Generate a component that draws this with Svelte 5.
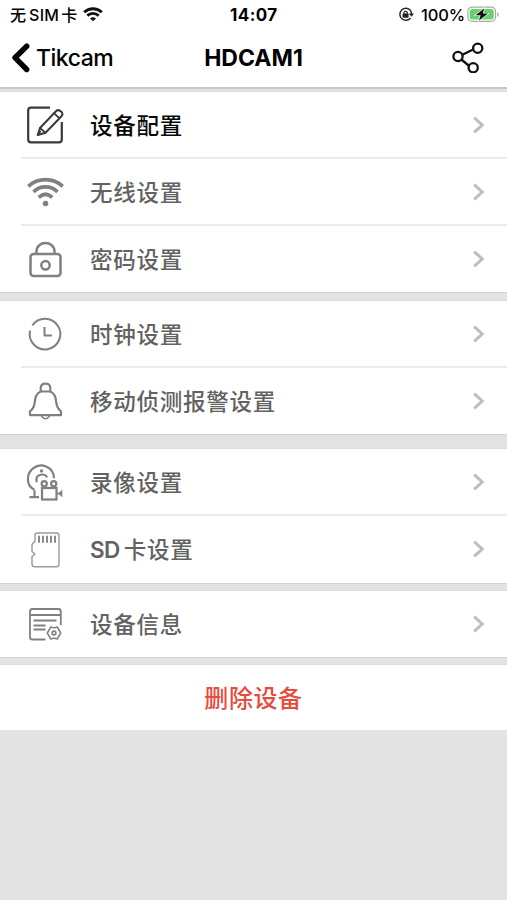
<script>
  const groups = [
    { gap: 9, rows: [['edit', '设备配置', 67], ['wifi', '无线设置', 67], ['lock', '密码设置', 66]] },
    { gap: 15, rows: [['clock', '时钟设置', 67], ['bell', '移动侦测报警设置', 66]] },
    { gap: 8, rows: [['camera', '录像设置', 67], ['card', 'SD卡设置', 67]] },
    { gap: 8, rows: [['info', '设备信息', 66]] }
  ];
</script>

<div class="screen">
  <header>
    <div class="status">
      <span class="carrier">无<b>SIM</b>卡</span>
      <svg class="signal" width="20" height="15" viewBox="0 0 20 15" fill="none" stroke="#111" stroke-width="2.9">
        <path d="M1.2 5.3C6.2.6 13.8.6 18.8 5.3M4.3 8.6C7.6 5.6 12.4 5.6 15.7 8.6" />
        <path d="M7 11.4Q10 9 13 11.4L10 14.2Z" fill="#111" stroke="none" />
      </svg>
      <span class="time">14:07</span>
      <svg class="rotation" width="16" height="15" viewBox="0 0 16 15" fill="none" stroke="#222" stroke-width="1.4">
        <path d="M12.5 3.5A6 6 0 1 0 12.6 11" /><path d="M12.3 3.2Q13.5 4.7 13.5 7" />
        <path d="M10.8 6.5h5.2l-2.6 3.3z" fill="#222" stroke="none" />
        <rect x="4.6" y="6.5" width="6" height="4.2" rx=".7" fill="#222" stroke="none" />
        <path d="M6 7V5.3Q7.6 2.8 9.2 5.3V7" stroke-width="1.2" />
      </svg>
      <span class="percent">100%</span>
      <svg class="battery" width="32" height="17" viewBox="0 0 32 17">
        <rect x=".9" y="1.2" width="27.6" height="14.2" rx="4.2" fill="#fff" stroke="#aaa" stroke-width="1.2" />
        <rect x="2.7" y="3" width="24" height="10.6" rx="2.5" fill="#65d26c" />
        <path d="M30.2 6v5q1.5-1 1.5-2.5T30.2 6" fill="#aaa" />
        <path d="M17 2.5 8.5 9.2h5.1L12 14.5 21 7.6h-5.1z" fill="#111" stroke="#fff" stroke-width="1.2" paint-order="stroke" />
      </svg>
    </div>
    <nav>
      <svg class="back" width="20" height="32" viewBox="0 0 20 32" fill="none" stroke="#000" stroke-width="5.4" stroke-linecap="round" stroke-linejoin="round"><path d="M16.7 4.2 5 15.7l11.7 11.8" /></svg>
      <span class="parent">Tikcam</span>
      <h1>HDCAM1</h1>
      <svg class="share" width="34" height="34" viewBox="0 0 34 34" fill="none" stroke="#111" stroke-width="2.3">
        <path d="m11.4 15.8 10.2-5M10.3 20.5l8 6.5" /><circle cx="7" cy="17.5" r="4.6" /><circle cx="26.7" cy="9.2" r="4.6" /><circle cx="22.2" cy="28.7" r="4.6" />
      </svg>
    </nav>
  </header>
  <div class="band top"></div>

  {#each groups as group}
    <section>
      {#each group.rows as [icon, label, height], i}
        <div class="row" class:active={icon === 'edit'} class:divided={i < group.rows.length - 1} style:height="{height}px">
          <svg class="icon" width="44" height="44" viewBox="0 0 44 44" fill="none" stroke="#808080" stroke-width="2.2" stroke-linejoin="round" stroke-linecap="round">
            {#if icon === 'edit'}
              <g stroke="#3a3a3a"><path d="M27 3.7H8Q5.2 3.7 5.2 6.5V35.5q0 2.8 2.8 2.8H36q2.800 0 2.800-2.800V18" stroke-linecap="butt" /><path d="m17 24 16.200-17q1.700-1.700 4-.2l1.600 1.500q1.400 2-.3 3.900L22.500 28.700 14.700 31z" stroke-width="2" /><path d="m31 9.200 5.200 5M17 24l5.500 4.700M15.200 30.700l2-3.200" stroke-width="1.800" /></g>
            {:else if icon === 'wifi'}
              <path d="M5.300 15.300C15 6.300 30 6.300 39.700 15.300M10.500 20.800C17.500 14.300 27.500 14.300 34.500 20.800M15.700 26.300C20 22.400 25 22.400 29.300 26.300" stroke-width="3.700" stroke-linecap="butt" /><circle cx="22.500" cy="32.500" r="2.800" fill="#808080" stroke="none" />
            {:else if icon === 'lock'}
              <g stroke-width="2.500"><rect x="7.500" y="17" width="30" height="22" rx="3" /><path d="M13.500 16.500v-2C13.500 3.300 31.500 3.300 31.500 14.500v2" /><circle cx="22.500" cy="28.300" r="4.200" /></g>
            {:else if icon === 'clock'}
              <path d="M9.300 12.500A15.300 15.300 0 1 1 7.100 17.500M21.500 14v8.500h7.500" stroke-linecap="butt" stroke-width="2" />
            {:else if icon === 'bell'}
              <path d="M17.700 12.500V9.200q0-4.500 4.800-4.500t4.800 4.500v3.300C34.500 15.500 32 23 34.500 28q1 2.300 3.500 4.300v3.800H7v-3.800q2.500-2 3.500-4.300C13 23 10.500 15.500 17.700 12.500Z" /><path d="M18 12.500h9" stroke-width="1.800" /><path d="M18.700 37.500q3.800 4.500 7.600 0" stroke-width="1.400" />
            {:else if icon === 'camera'}
              <g transform="translate(0 -.3)"><path d="M11.500 29C3.200 25.500 2.800 13.500 10 7.700 17.500 1.500 30.500 5.500 31 17.500M13.700 21.500C11.500 12.800 22.500 12 24 16.700M11.500 29.500v6.500M6.500 36.500h9.500" stroke-linecap="butt" /><circle cx="18.500" cy="10.200" r="1.700" fill="#808080" stroke="none" /><circle cx="21.200" cy="23" r="2.600" /><circle cx="30.700" cy="23" r="2.600" /><rect x="19" y="27.300" width="14.500" height="11.500" stroke-linejoin="miter" /><path d="M34 32.800h2" /><path d="m35.300 32.800 4-4v8z" fill="#808080" stroke="none" /></g>
            {:else if icon === 'card'}
              <g stroke="#999" stroke-width="1.400"><path d="M14 5H33.500q2.500 0 2.500 2.500V36q0 2.700-2.500 2.700H11.500q-2.500 0-2.500-2.700v-7.500l3-2.200-3-2.700v-7.100l3-3.500V7q0-2 2-2Z" /><path d="M16 7.700v7M20 7.700v7M24 7.700v7M28 7.700v7M32 7.700v7" stroke="#858585" stroke-width="1.900" stroke-linecap="butt" /></g>
            {:else}
              <g stroke-width="1.800" stroke-linecap="butt"><path d="M22.500 37.500H9.500q-2.500 0-2.500-2.500V9.500q0-2.500 2.500-2.500H35.300q2.500 0 2.500 2.500V23M7 13h30.500M10.500 18.500h23M10.500 23.500h12M10.500 27.500h12" /><path d="M27.800 25q3.200 1.300 6.400 0L37.700 31l-3.500 6q-3.200-1.300-6.400 0L24.300 31z" stroke-width="1.500" /><circle cx="31" cy="31" r="1.900" stroke-width="1.600" /></g>
            {/if}
          </svg>
          <span class="label">{#if icon === 'card'}<span class="latin">SD</span>卡设置{:else}{label}{/if}</span>
          <svg class="chevron" width="14" height="20" viewBox="0 0 14 20" fill="none" stroke="#bdbdbd" stroke-width="3"><path d="m2.200 2.600 8 7.400-8 7.400" /></svg>
        </div>
      {/each}
    </section>
    <div class="band" style:height="{group.gap}px"></div>
  {/each}
  <button>删除设备</button>
</div>

<style>
  :global(body) { margin: 0; background: #e3e3e3; }
  .screen { width: 507px; height: 900px; overflow: hidden; background: #e3e3e3; color: #000; font-family: Inter, "Noto Sans CJK SC", sans-serif; }
  header { height: 87px; background: #fff; }
  .status { display: flex; align-items: center; height: 29px; padding-left: 10px; font-size: 16px; font-weight: 500; white-space: nowrap; box-sizing: border-box; }
  .carrier { width: 67px; font-size: 16px; line-height: 28px; }
  .carrier b { margin: 0 2px 0 3px; font-size: 16px; font-weight: 500; letter-spacing: .3px; }
  .signal { margin: 0 0 1px 6px; }
  .time { width: 48px; margin-left: 127px; font-weight: 700; font-size: 17px; letter-spacing: .4px; line-height: 28px; }
  .rotation { margin-left: 120px; }
  .percent { width: 45px; margin-left: 7px; font-size: 16.5px; font-weight: 500; letter-spacing: -.1px; }
  .battery { flex: none; margin-left: 1px; }
  nav { display: grid; grid-template-columns: 36px 140px 1fr 60px; align-items: center; height: 58px; }
  .back { margin-left: 10px; }
  .parent { font-size: 23px; font-weight: 500; letter-spacing: -.5px; line-height: 58px; }
  h1 { margin: 0; width: 155px; text-align: center; font-size: 23px; letter-spacing: 0; font-weight: 700; line-height: 58px; }
  .share { margin-left: 4px; margin-top: -4px; }
  .band { box-sizing: border-box; border-top: 1px solid #d3d3d3; border-bottom: 1px solid #dcdcdc; background: #e3e3e3; }
  .top { height: 5px; border-top: 2px solid #c8c8c8; }
  section { background: #fff; }
  .row { position: relative; display: flex; align-items: center; box-sizing: border-box; padding-left: 23px; color: #626262; }
  .divided::after { content: ""; position: absolute; left: 21px; right: 0; bottom: 0; height: 2px; background: #ebebeb; }
  .active { color: #080808; }
  .icon { flex: none; }
  .label { flex: 1; margin-left: 23px; font: 500 22.5px/33px Inter, "Noto Sans CJK SC", sans-serif; letter-spacing: .75px; }
  .latin { margin-right: 4px; letter-spacing: -.6px; font-weight: 600; }
  .chevron { margin: 0 21px 1px 0; }
  button { display: block; width: 100%; height: 65px; border: 0; padding: 0 0 1px; background: #fff; color: #e64b3d; font: 500 24px/64px "Noto Sans CJK SC", sans-serif; letter-spacing: .6px; }
</style>
